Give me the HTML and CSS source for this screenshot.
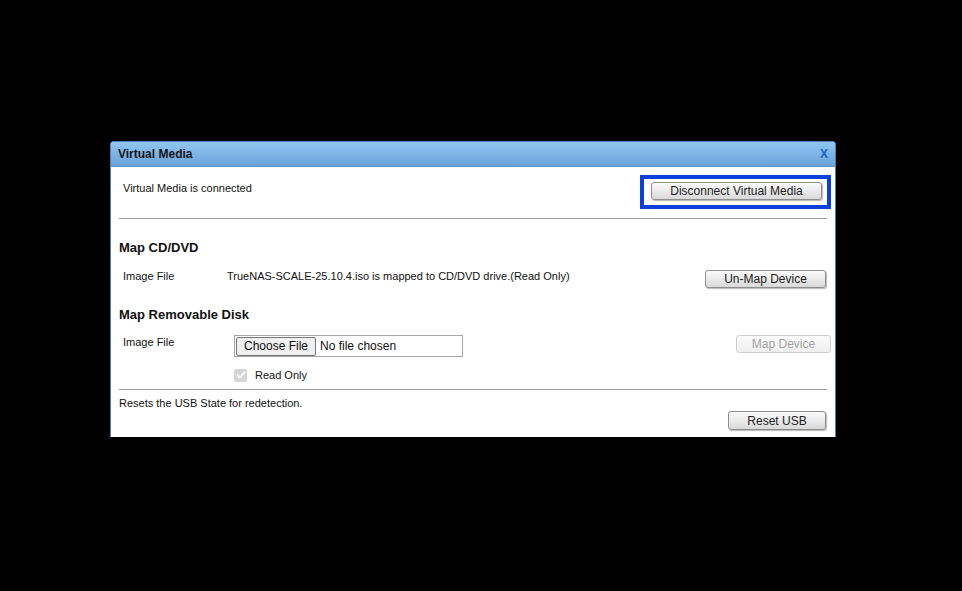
FILE: index.html
```html
<!DOCTYPE html>
<html>
<head>
<meta charset="utf-8">
<link rel="stylesheet" href="styles.css">
</head>
<body>
<div class="stage">
  <div class="dialog">
    <div class="titlebar">
      <span class="title">Virtual Media</span>
      <span class="close">X</span>
    </div>
    <div class="content">
      <div class="status-row">
        <span class="status-text">Virtual Media is connected</span>
        <div class="highlight">
          <button class="btn btn-disconnect">Disconnect Virtual Media</button>
        </div>
      </div>
      <div class="rule"></div>

      <h3 class="heading heading-cd">Map CD/DVD</h3>
      <div class="map-row">
        <span class="label label-cd">Image File</span>
        <span class="mapped-text">TrueNAS-SCALE-25.10.4.iso is mapped to CD/DVD drive.(Read Only)</span>
        <button class="btn btn-unmap">Un-Map Device</button>
      </div>

      <h3 class="heading heading-disk">Map Removable Disk</h3>
      <div class="disk-row">
        <span class="label label-disk">Image File</span>
        <div class="file-input">
          <span class="file-btn">Choose File</span>
          <span class="file-name">No file chosen</span>
        </div>
        <button class="btn btn-map" disabled>Map Device</button>
      </div>
      <div class="check-row">
        <span class="checkbox"><svg width="12" height="12" viewBox="0 0 12 12"><path d="M2.6 6.2 L5 8.6 L9.6 3.2" fill="none" stroke="#ffffff" stroke-width="1.8" stroke-linecap="round" stroke-linejoin="round"/></svg></span>
        <span class="check-label">Read Only</span>
      </div>
      <div class="rule rule-bottom"></div>
      <div class="reset-text">Resets the USB State for redetection.</div>
      <div class="reset-row">
        <button class="btn btn-reset">Reset USB</button>
      </div>
    </div>
  </div>
</div>
</body>
</html>
```

FILE: styles.css
```css
html, body {
  margin: 0;
  padding: 0;
  background: #000000;
  height: 100%;
}

.stage {
  padding: 141px 0 0 110px;
}

.dialog {
  box-sizing: border-box;
  width: 726px;
  height: 296px;
  border: 1px solid #4b7fb6;
  border-bottom: none;
  border-radius: 4px 4px 0 0;
  background: #ffffff;
  overflow: hidden;
  font-family: "Liberation Sans", Arial, sans-serif;
  color: #111111;
}

.titlebar {
  height: 24px;
  display: flex;
  align-items: center;
  justify-content: space-between;
  padding: 0 7px 0 7px;
  background: linear-gradient(#90c6f0, #69a2da);
  border-bottom: 1px solid #5f93c8;
}

.title {
  font-size: 12px;
  font-weight: bold;
  color: #141414;
}

.close {
  font-size: 12px;
  font-weight: bold;
  color: #1e63c8;
}

.content {
  padding: 0 8px 0 8px;
  font-size: 11px;
}

.status-row {
  height: 51px;
  display: flex;
  align-items: flex-start;
  justify-content: space-between;
}

.status-text {
  margin: 14px 0 0 4px;
  line-height: 14px;
}

.highlight {
  margin: 8px -4px 0 0;
  border: 4px solid #0a40dc;
  padding: 3px 5px 5px 7px;
  height: 18px;
}

.rule {
  height: 0;
  border-top: 1px solid #9c9c9c;
}

.btn {
  box-sizing: border-box;
  height: 18px;
  padding: 0;
  font-family: "Liberation Sans", Arial, sans-serif;
  font-size: 12px;
  line-height: 16px;
  color: #222222;
  background: linear-gradient(#fbfbfb, #e9e9e9 55%, #d9d9d9);
  border: 1px solid #8e8e8e;
  border-radius: 3px;
  box-shadow: 1px 1px 1px rgba(0, 0, 0, 0.28);
  text-align: center;
}

.btn-disconnect { width: 171px; display: block; }
.btn-unmap { width: 121px; margin-top: 1px; margin-left: auto; margin-right: 1px; }
.btn-map {
  width: 95px;
  margin-left: auto;
  margin-right: -4px;
  color: #a3a3a3;
  background: linear-gradient(#fbfbfb, #f0f0f0);
  border-color: #cfcfcf;
  box-shadow: none;
}
.btn-reset { width: 98px; height: 19px; margin-right: 1px; }

.heading {
  margin: 0;
  font-size: 13px;
  font-weight: bold;
  line-height: 18px;
  color: #111111;
}

.heading-cd { margin-top: 20px; }
.heading-disk { margin-top: 18px; }

.map-row {
  margin-top: 12px;
  display: flex;
  align-items: flex-start;
  height: 19px;
}

.label {
  margin-left: 4px;
  line-height: 14px;
}

.label-cd { width: 104px; }
.label-disk { width: 111px; }

.mapped-text {
  line-height: 14px;
}

.disk-row {
  margin-top: 11px;
  display: flex;
  align-items: flex-start;
  height: 22px;
}

.file-input {
  box-sizing: border-box;
  width: 229px;
  height: 22px;
  border: 1px solid #a6a6a6;
  display: flex;
  align-items: center;
  font-size: 12px;
}

.file-btn {
  box-sizing: border-box;
  height: 19px;
  margin-left: 1px;
  padding: 0 7px;
  line-height: 17px;
  border: 1px solid #767676;
  border-radius: 2px;
  background: #efefef;
  color: #111111;
}

.file-name {
  margin-left: 4px;
  color: #111111;
}

.check-row {
  margin-top: 11px;
  height: 14px;
  display: flex;
  align-items: center;
  padding-left: 115px;
}

.checkbox {
  box-sizing: border-box;
  width: 13px;
  height: 13px;
  border-radius: 2px;
  background: #d6d6d6;
  display: flex;
  align-items: center;
  justify-content: center;
}

.checkbox svg { display: block; }

.check-label {
  margin-left: 8px;
  line-height: 14px;
}

.rule-bottom { margin-top: 7px; }

.reset-text {
  margin-top: 6px;
  line-height: 14px;
}

.reset-row {
  margin-top: 1px;
  display: flex;
  justify-content: flex-end;
}
```
